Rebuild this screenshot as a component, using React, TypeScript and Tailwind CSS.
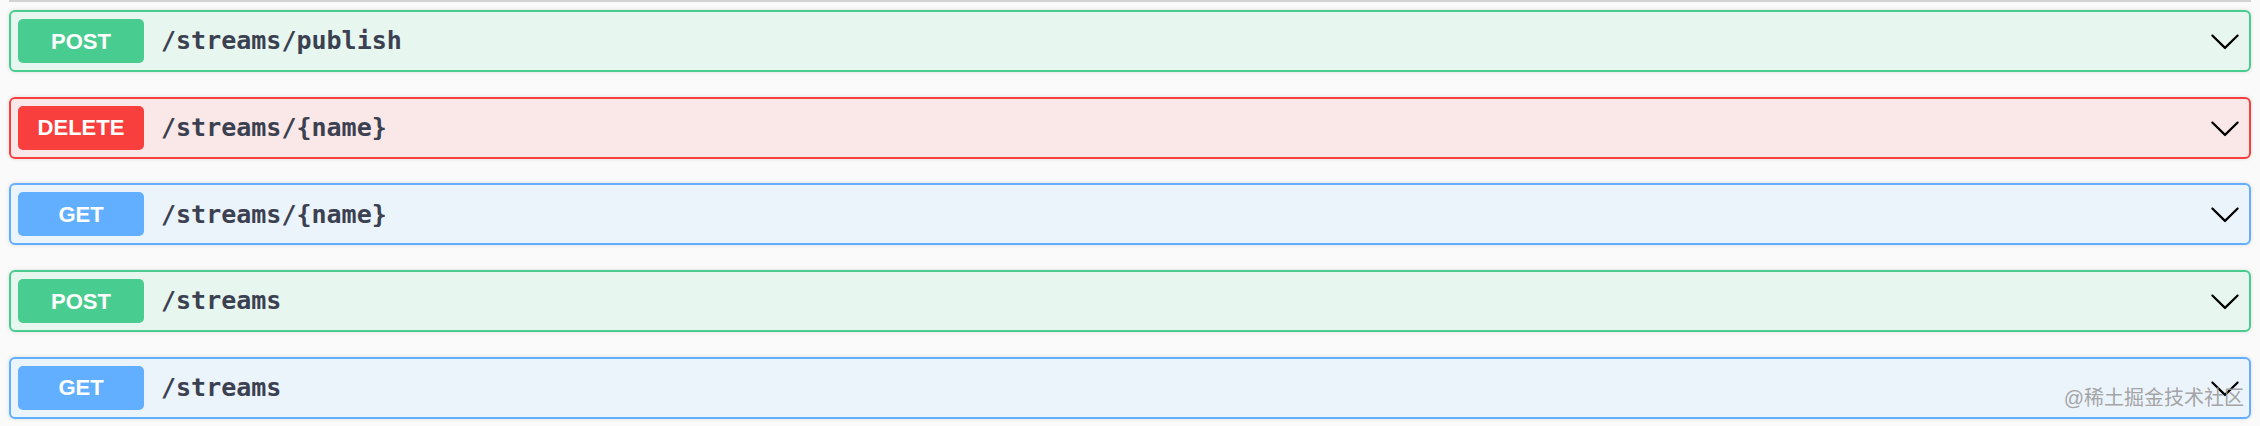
import React from 'react';

type Op = {
  method: 'POST' | 'DELETE' | 'GET';
  path: string;
};

const ops: Op[] = [
  { method: 'POST', path: '/streams/publish' },
  { method: 'DELETE', path: '/streams/{name}' },
  { method: 'GET', path: '/streams/{name}' },
  { method: 'POST', path: '/streams' },
  { method: 'GET', path: '/streams' },
];

const styles: Record<Op['method'], { box: string; badge: string }> = {
  POST: { box: 'border-[#49cc90] bg-[#e8f6f0]', badge: 'bg-[#49cc90]' },
  DELETE: { box: 'border-[#f93e3e] bg-[#fae7e7]', badge: 'bg-[#f93e3e]' },
  GET: { box: 'border-[#61affe] bg-[#ebf3fb]', badge: 'bg-[#61affe]' },
};

const Chevron = () => (
  <svg width="32" height="32" viewBox="0 0 20 20" className="shrink-0">
    <path
      fill="#000"
      d="M17.418 6.109c.272-.268.709-.268.979 0s.271.701 0 .969l-7.908 7.83c-.27.268-.707.268-.979 0l-7.908-7.83c-.27-.268-.27-.701 0-.969.271-.268.709-.268.979 0L10 13.25l7.418-7.141z"
    />
  </svg>
);

export default function App() {
  return (
    <div className="relative w-[2260px] h-[426px] overflow-hidden bg-[#fafafa] px-[9px]">
      {/* bottom edge of the block above */}
      <div className="h-[2px] bg-[#d4d4d4]" />
      <div className="flex flex-col gap-[24.7px] pt-[8px]">
        {ops.map((op, i) => (
          <div
            key={i}
            className={`flex items-center h-[62px] border-2 rounded-[6px] pl-[7px] pr-[8px] shadow-[0_0_4px_rgba(0,0,0,0.12)] ${styles[op.method].box}`}
          >
            <div
              className={`flex items-center justify-center w-[126px] h-[44px] rounded-[5px] text-white text-[22px] font-bold ${styles[op.method].badge}`}
              style={{ fontFamily: '"Liberation Sans", Arial, sans-serif' }}
            >
              {op.method}
            </div>
            <div
              className="flex-1 ml-[17px] text-[25px] font-bold text-[#3b4151]"
              style={{ fontFamily: '"DejaVu Sans Mono", monospace' }}
            >
              {op.path}
            </div>
            <Chevron />
          </div>
        ))}
      </div>
      <div
        className="absolute right-[16px] top-[388px] text-[20px] leading-none text-[#9a9a9a]/90"
        style={{ fontFamily: '"Liberation Sans", "Noto Sans CJK SC", sans-serif' }}
      >
        @稀土掘金技术社区
      </div>
    </div>
  );
}
